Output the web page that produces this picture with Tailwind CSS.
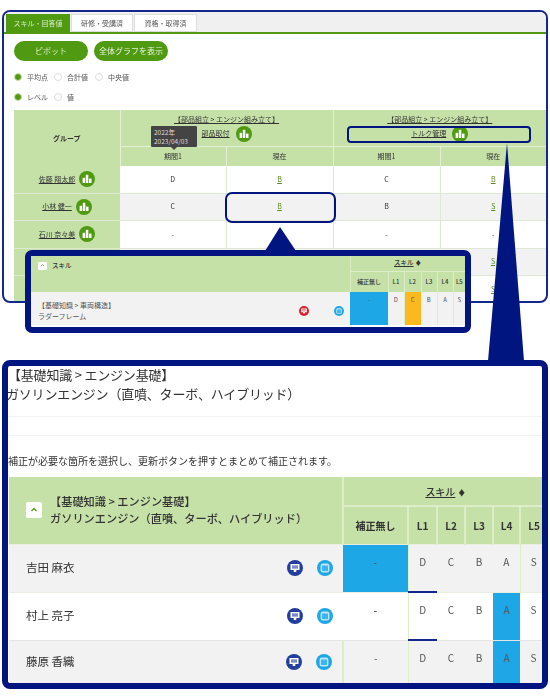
<!DOCTYPE html>
<html lang="ja">
<head>
  <meta charset="UTF-8">
  <title>スキル</title>
  <script src="https://cdn.jsdelivr.net/npm/@tailwindcss/browser@4"></script>
</head>
<body class="bg-white">
<svg class="hidden">
  <symbol id="bars" viewBox="0 0 16 16">
    <circle cx="8" cy="8" r="8" fill="#4f9a10"/>
    <rect x="3.6" y="6.8" width="2.5" height="5.2" fill="#fff"/>
    <rect x="6.8" y="3.8" width="2.5" height="8.2" fill="#fff"/>
    <rect x="10" y="7.6" width="2.5" height="4.4" fill="#fff"/>
  </symbol>
  <symbol id="board" viewBox="0 0 16 16">
    <circle cx="8" cy="8" r="8" fill="currentColor"/>
    <path d="M3.5 4h9v6h-3.2v2h-2.6v-2H3.5z" fill="#fff"/>
    <rect x="5" y="5.6" width="6" height="1" fill="currentColor"/>
    <rect x="5" y="7.4" width="6" height="1" fill="currentColor"/>
  </symbol>
  <symbol id="note" viewBox="0 0 16 16">
    <circle cx="8" cy="8" r="8" fill="#1ea7e6"/>
    <rect x="3.6" y="3.6" width="8.8" height="8.8" rx="2.2" fill="#bfe6f8"/>
    <rect x="5" y="5.4" width="6" height="5.6" rx="0.6" fill="#3db4ea"/>
  </symbol>
</svg>

<div class="relative w-[550px] h-[698px] overflow-hidden pt-[10px] font-['Noto_Sans_CJK_JP','Liberation_Sans',sans-serif] text-[#333] blur-[0.45px]">

  <!-- top panel -->
  <div class="ml-[2px] w-[546px] h-[293px] border-2 border-[#14288c] rounded-[8px] overflow-hidden bg-white">
    <div class="flex items-end gap-[1px] h-[20px] pl-[2px] bg-[#f0f0f0] border-b-2 border-[#4f9a10] text-[7px] box-content">
      <div class="w-[64px] h-[18px] flex items-center justify-center bg-[#4f9a10] text-[#dcecc8]">スキル・回答値</div>
      <div class="w-[62px] h-[18px] flex items-center justify-center bg-white border border-[#ddd] text-[#555]">研修・受講済</div>
      <div class="w-[63px] h-[18px] flex items-center justify-center bg-white border border-[#ddd] text-[#555]">資格・取得済</div>
    </div>

    <div class="flex gap-[6px] mt-[7px] ml-[10px]">
      <div class="w-[74px] h-[20px] rounded-full bg-[#4f9a10] text-[#d5e8bd] text-[8px] flex items-center justify-center">ピボット</div>
      <div class="w-[74px] h-[20px] rounded-full bg-[#4f9a10] text-[#eaf4dd] text-[8px] flex items-center justify-center">全体グラフを表示</div>
    </div>

    <div class="flex items-center h-[10px] mt-[11px] ml-[10px] text-[7px] text-[#555]">
      <span class="w-[8px] h-[8px] rounded-full bg-[#4f9a10] border border-[#cde3b2] mr-[5px]"></span><span class="w-[27px]">平均点</span>
      <span class="w-[8px] h-[8px] rounded-full border border-[#ddd] mr-[5px]"></span><span class="w-[28px]">合計値</span>
      <span class="w-[8px] h-[8px] rounded-full border border-[#ddd] mr-[5px]"></span><span>中央値</span>
    </div>
    <div class="flex items-center h-[10px] mt-[10px] ml-[10px] text-[7px] text-[#555]">
      <span class="w-[8px] h-[8px] rounded-full bg-[#4f9a10] border border-[#cde3b2] mr-[5px]"></span><span class="w-[27px]">レベル</span>
      <span class="w-[8px] h-[8px] rounded-full border border-[#ddd] mr-[5px]"></span><span>値</span>
    </div>

    <table class="table-fixed w-[532px] ml-[10px] mt-[8px] border-collapse text-[7px] text-center">
      <colgroup><col class="w-[106px]"><col class="w-[106px]"><col class="w-[107px]"><col class="w-[107px]"><col class="w-[106px]"></colgroup>
      <tr class="h-[36px] bg-[#c6e1a8] text-[#333]">
        <th rowspan="2" class="font-bold">グループ</th>
        <td colspan="2" class="border-l border-b border-[#e4f0d6] align-top pt-[4px]">
          <div class="underline">【部品組立 &gt; エンジン組み立て】</div>
          <div class="flex items-center justify-center gap-[6px] mt-[1px]"><span class="underline">部品取付</span><svg class="w-[16px] h-[16px]"><use href="#bars"/></svg></div>
        </td>
        <td colspan="2" class="border-l border-b border-[#e4f0d6] align-top pt-[4px]">
          <div class="underline">【部品組立 &gt; エンジン組み立て】</div>
          <div class="flex items-center justify-center gap-[6px] mt-[1px]"><span class="underline">トルク管理</span><svg class="w-[16px] h-[16px]"><use href="#bars"/></svg></div>
        </td>
      </tr>
      <tr class="h-[20px] bg-[#c6e1a8]">
        <td class="border-l border-[#e4f0d6]">期間1</td>
        <td class="border-l border-[#e4f0d6]">現在</td>
        <td class="border-l border-[#e4f0d6]">期間1</td>
        <td class="border-l border-[#e4f0d6]">現在</td>
      </tr>
      <tr class="h-[27px] border-b border-[#dfe8d2]">
        <th class="bg-[#c6e1a8] font-normal"><div class="flex items-center justify-center gap-[4px]"><span class="underline">佐藤 翔太郎</span><svg class="w-[16px] h-[16px]"><use href="#bars"/></svg></div></th>
        <td class="border-r border-[#dfe8d2]">D</td><td class="border-r border-[#dfe8d2] text-[#5d8a1e] underline">B</td><td class="border-r border-[#dfe8d2]">C</td><td class="text-[#5d8a1e] underline">B</td>
      </tr>
      <tr class="h-[27px] bg-[#f2f2f2] border-b border-[#dfe8d2]">
        <th class="bg-[#c6e1a8] font-normal"><div class="flex items-center justify-center gap-[4px]"><span class="underline">小林 健一</span><svg class="w-[16px] h-[16px]"><use href="#bars"/></svg></div></th>
        <td class="border-r border-[#dfe8d2]">C</td><td class="border-r border-[#dfe8d2] text-[#5d8a1e] underline">B</td><td class="border-r border-[#dfe8d2]">B</td><td class="text-[#5d8a1e] underline">S</td>
      </tr>
      <tr class="h-[28px] border-b border-[#dfe8d2]">
        <th class="bg-[#c6e1a8] font-normal"><div class="flex items-center justify-center gap-[4px]"><span class="underline">石川 奈々美</span><svg class="w-[16px] h-[16px]"><use href="#bars"/></svg></div></th>
        <td class="border-r border-[#dfe8d2]">-</td><td class="border-r border-[#dfe8d2]">-</td><td class="border-r border-[#dfe8d2]">-</td><td>-</td>
      </tr>
      <tr class="h-[27px] bg-[#f2f2f2] border-b border-[#dfe8d2]">
        <th class="bg-[#c6e1a8]"></th><td></td><td></td><td></td><td class="text-[#5d8a1e] underline">S</td>
      </tr>
      <tr class="h-[28px]">
        <th class="bg-[#c6e1a8]"></th><td></td><td></td><td></td><td class="text-[#5d8a1e] underline">S</td>
      </tr>
    </table>
  </div>

  <!-- bottom panel -->
  <div class="mt-[57px] ml-[2px] w-[546px] h-[329px] border-[6px] border-[#00157f] rounded-[8px] overflow-hidden bg-white">
    <div class="text-[13px] leading-[19px] -mt-[1px] h-[40px] -tracking-[0.2px]">
      <div>【基礎知識 &gt; エンジン基礎】</div>
      <div class="-ml-[2px]">ガソリンエンジン（直噴、ターボ、ハイブリッド）</div>
    </div>
    <div class="h-[20px] mt-[11px] border-y border-[#f2f2f2]"></div>
    <div class="text-[10px] leading-[14px] mt-[18px]">補正が必要な箇所を選択し、更新ボタンを押すとまとめて補正されます。</div>

    <table class="table-fixed w-[538px] ml-[1px] mt-[9px] border-collapse text-center text-[11px]">
      <colgroup><col class="w-[334px]"><col class="w-[65px]"><col class="w-[29px]"><col class="w-[28px]"><col class="w-[28px]"><col class="w-[27px]"><col class="w-[27px]"></colgroup>
      <tr class="h-[29px] bg-[#c6e1a8]">
        <th rowspan="2" class="text-left font-medium border-r-2 border-[#dcedc8]">
          <div class="flex items-center pl-[17px] gap-[8px]">
            <span class="w-[16px] h-[16px] bg-white rounded-[2px] flex items-center justify-center shrink-0"><svg class="w-[8px] h-[8px]" viewBox="0 0 8 8"><path d="M1.5 5 4 2.5 6.5 5" fill="none" stroke="#4f9a10" stroke-width="1.3"/></svg></span>
            <div class="leading-[17px] text-[11.2px]"><div>【基礎知識 &gt; エンジン基礎】</div><div>ガソリンエンジン（直噴、ターボ、ハイブリッド）</div></div>
          </div>
        </th>
        <th colspan="6" class="font-medium text-[10px] border-b-2 border-[#dcedc8]"><span class="underline">スキル</span> <span class="text-[8px]">♦</span></th>
      </tr>
      <tr class="h-[38px] bg-[#c6e1a8] font-bold text-[10px]">
        <td class="border-r-2 border-[#dcedc8]">補正無し</td>
        <td class="border-r-2 border-[#dcedc8]">L1</td><td class="border-r-2 border-[#dcedc8]">L2</td><td class="border-r-2 border-[#dcedc8]">L3</td><td class="border-r-2 border-[#dcedc8]">L4</td><td>L5</td>
      </tr>
      <tr class="h-[48px] bg-[#f2f2f2] border-y border-[#e8efe0] text-[10px] text-[#555] align-top">
        <th class="bg-[#f2f2f2] font-normal text-left text-[11.5px] text-[#333] align-middle">
          <div class="flex items-center pl-[17px]"><span class="flex-1">吉田 麻衣</span><svg class="w-[16px] h-[16px] text-[#233f9e] mr-[14px]"><use href="#board"/></svg><svg class="w-[16px] h-[16px] mr-[10px]"><use href="#note"/></svg></div>
        </th>
        <td class="bg-[#1ea7e6] pt-[9px]">-</td>
        <td class="pt-[9px] border-b-2 border-b-[#14288c] border-l border-[#dcedc8]">D</td><td class="pt-[9px]">C</td><td class="pt-[9px]">B</td><td class="pt-[9px]">A</td><td class="pt-[9px] border-l border-[#dcedc8]">S</td>
      </tr>
      <tr class="h-[48px] border-b border-[#e5e5e5] text-[10px] text-[#555] align-top">
        <th class="font-normal text-left text-[11.5px] text-[#333] align-middle">
          <div class="flex items-center pl-[17px]"><span class="flex-1">村上 亮子</span><svg class="w-[16px] h-[16px] text-[#233f9e] mr-[14px]"><use href="#board"/></svg><svg class="w-[16px] h-[16px] mr-[10px]"><use href="#note"/></svg></div>
        </th>
        <td class="pt-[9px] font-bold">-</td>
        <td class="pt-[9px] border-b-2 border-b-[#14288c] border-l border-[#dcedc8]">D</td><td class="pt-[9px]">C</td><td class="pt-[9px]">B</td><td class="pt-[9px] bg-[#1ea7e6]">A</td><td class="pt-[9px]">S</td>
      </tr>
      <tr class="h-[43px] bg-[#f2f2f2] text-[10px] text-[#555] align-top">
        <th class="font-normal text-left text-[11.5px] text-[#333] align-middle">
          <div class="flex items-center pl-[17px]"><span class="flex-1">藤原 香織</span><svg class="w-[16px] h-[16px] text-[#233f9e] mr-[14px]"><use href="#board"/></svg><svg class="w-[16px] h-[16px] mr-[10px]"><use href="#note"/></svg></div>
        </th>
        <td class="pt-[9px] border-l-2 border-[#dcedc8]">-</td>
        <td class="pt-[9px] border-l border-[#dcedc8]">D</td><td class="pt-[9px]">C</td><td class="pt-[9px]">B</td><td class="pt-[9px] bg-[#1ea7e6]">A</td><td class="pt-[9px]">S</td>
      </tr>
    </table>
  </div>

  <!-- tooltip -->
  <div class="absolute left-[151px] top-[126px] w-[46px] h-[21px] bg-[#444] text-[#ddd] text-[6.5px] leading-[9px] pl-[3px] pt-[2px] rounded-[1px]">2022年<br>2023/04/03</div>
  <div class="absolute left-[171px] top-[147px] w-0 h-0 border-x-[3px] border-x-transparent border-t-[3px] border-t-[#444]"></div>

  <!-- highlight boxes -->
  <div class="absolute left-[347px] top-[126px] w-[184px] h-[17px] border-2 border-[#00157f] rounded-[4px]"></div>
  <div class="absolute left-[225px] top-[192px] w-[111px] h-[31px] border-2 border-[#00157f] rounded-[7px]"></div>

  <!-- callout pointers -->
  <svg class="absolute left-0 top-0 w-[550px] h-[698px]" viewBox="0 0 550 698">
    <polygon points="280,227 296,251 265,251" fill="#00157f"/>
    <polygon points="507,143 524,361 488,361" fill="#00157f"/>
  </svg>

  <!-- small callout -->
  <div class="absolute left-[25px] top-[250px] w-[446px] h-[83px] border-[6px] border-[#00157f] rounded-[7px] overflow-hidden bg-white">
    <table class="table-fixed w-[434px] border-collapse text-center text-[6.5px]">
      <colgroup><col class="w-[319px]"><col class="w-[38px]"><col class="w-[16px]"><col class="w-[17px]"><col class="w-[16px]"><col class="w-[16px]"><col class="w-[12px]"></colgroup>
      <tr class="h-[15px] bg-[#c6e1a8]">
        <th rowspan="2" class="align-top text-left font-medium border-r border-[#dcedc8]">
          <div class="flex items-center gap-[5px] pl-[7px] pt-[5px]"><span class="w-[9px] h-[8px] bg-white rounded-[1px] flex items-center justify-center"><svg class="w-[5px] h-[5px]" viewBox="0 0 8 8"><path d="M1.5 5 4 2.5 6.5 5" fill="none" stroke="#4f9a10" stroke-width="1.3"/></svg></span>スキル</div>
        </th>
        <th colspan="6" class="font-medium border-b border-[#dcedc8]"><span class="underline">スキル</span> ♦</th>
      </tr>
      <tr class="h-[21px] bg-[#c6e1a8] text-[6px] font-medium">
        <td class="border-r border-[#dcedc8]">補正無し</td><td class="border-r border-[#dcedc8]">L1</td><td class="border-r border-[#dcedc8]">L2</td><td class="border-r border-[#dcedc8]">L3</td><td class="border-r border-[#dcedc8]">L4</td><td>L5</td>
      </tr>
      <tr class="h-[33px] bg-[#f2f2f2] align-top text-[6px] text-[#555]">
        <th class="text-left font-normal align-top">
          <div class="flex items-center pl-[7px] pt-[8px]"><div class="flex-1 leading-[11px] text-[7px]">【基礎知識 &gt; 車両構造】<br>ラダーフレーム</div><svg class="w-[10px] h-[10px] text-[#d3202c] mr-[25px]"><use href="#board"/></svg><svg class="w-[10px] h-[10px] mr-[6px]"><use href="#note"/></svg></div>
        </th>
        <td class="bg-[#1ea7e6] pt-[3px]">-</td><td class="pt-[3px] border-r border-[#dcedc8]">D</td><td class="pt-[3px] bg-[#fbb91f]">C</td><td class="pt-[3px] border-r border-[#dcedc8]">B</td><td class="pt-[3px] border-r border-[#dcedc8]">A</td><td class="pt-[3px]">S</td>
      </tr>
    </table>
  </div>
</div>
</body>
</html>
